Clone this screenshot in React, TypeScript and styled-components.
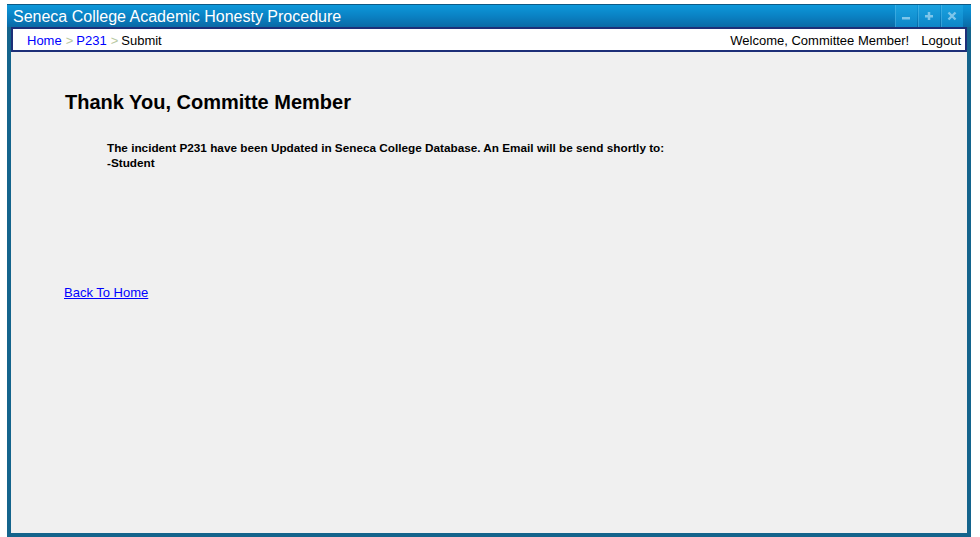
import React from "react";
import styled, { createGlobalStyle } from "styled-components";

const Global = createGlobalStyle`
  html, body { margin: 0; padding: 0; background: #ffffff; }
  body { font-family: "Liberation Sans", Arial, sans-serif; }
`;

const Page = styled.div`
  padding: 4px 9px 0 7px;
  height: 537px;
  box-sizing: border-box;
`;

const Window = styled.div`
  height: 533px;
  box-sizing: border-box;
  display: flex;
  flex-direction: column;
  background: #14648c;
  border-top: 1px solid #0d5a86;
  padding: 0 4px 4px 4px;
`;

const TitleBar = styled.div`
  height: 22px;
  margin: 0 -4px;
  padding: 0 4px 0 6px;
  display: flex;
  align-items: center;
  background: linear-gradient(to bottom, #0d98da 0%, #0a82c4 50%, #0a6aa6 100%);
`;

const Title = styled.div`
  flex: 1;
  color: #ffffff;
  font-size: 16px;
  line-height: 22px;
  padding-top: 1px;
  white-space: nowrap;
`;

const Controls = styled.div`
  display: flex;
  height: 22px;
  margin-right: 4px;
`;

const Ctrl = styled.div`
  width: 22px;
  height: 22px;
  margin-left: 1px;
  display: flex;
  align-items: center;
  justify-content: center;
  background: linear-gradient(to bottom, #1aa2e0, #0e86c8);
  box-shadow: inset 1px 0 0 rgba(120, 200, 240, 0.35);
`;

const NavBar = styled.div`
  height: 19px;
  border: 2px solid #1d2f78;
  background: #ffffff;
  display: flex;
  align-items: center;
  justify-content: space-between;
  padding: 2px 4px 0 14px;
  box-sizing: content-box;
  font-size: 13px;
  color: #000;
`;

const Crumbs = styled.div`
  display: flex;
  align-items: center;
`;

const CrumbLink = styled.span`
  color: #0000ff;
`;

const Sep = styled.span`
  color: #b8c8a0;
  margin: 0 3px 0 4px;
`;

const UserArea = styled.div`
  display: flex;
  gap: 12px;
`;

const Content = styled.div`
  flex: 1;
  background: #f0f0f0;
  padding: 38px 0 0 54px;
`;

const Heading = styled.h1`
  margin: 0;
  font-size: 20px;
  font-weight: bold;
  color: #000;
  line-height: 24px;
`;

const Message = styled.div`
  margin: 26px 0 0 42px;
  font-size: 11.75px;
  font-weight: bold;
  line-height: 15px;
  color: #000;
`;

const BackLink = styled.a`
  display: inline-block;
  margin: 115px 0 0 -1px;
  font-size: 13px;
  color: #0000ff;
  text-decoration: underline;
`;

const iconColor = "#7ec6ea";

export default function App() {
  return (
    <>
      <Global />
      <Page>
        <Window>
          <TitleBar>
            <Title>Seneca College Academic Honesty Procedure</Title>
            <Controls>
              <Ctrl>
                <svg width="10" height="10" viewBox="0 0 10 10">
                  <rect x="1" y="6" width="8" height="2.5" fill={iconColor} />
                </svg>
              </Ctrl>
              <Ctrl>
                <svg width="10" height="10" viewBox="0 0 10 10">
                  <rect x="1" y="4" width="8" height="2.5" fill={iconColor} />
                  <rect x="3.75" y="1" width="2.5" height="8" fill={iconColor} />
                </svg>
              </Ctrl>
              <Ctrl>
                <svg width="10" height="10" viewBox="0 0 10 10">
                  <path d="M1.5 1.5 L8.5 8.5 M8.5 1.5 L1.5 8.5" stroke={iconColor} strokeWidth="2.4" />
                </svg>
              </Ctrl>
            </Controls>
          </TitleBar>
          <NavBar>
            <Crumbs>
              <CrumbLink>Home</CrumbLink>
              <Sep>&gt;</Sep>
              <CrumbLink>P231</CrumbLink>
              <Sep>&gt;</Sep>
              <span>Submit</span>
            </Crumbs>
            <UserArea>
              <span>Welcome, Committee Member!</span>
              <span>Logout</span>
            </UserArea>
          </NavBar>
          <Content>
            <Heading>Thank You, Committe Member</Heading>
            <Message>
              The incident P231 have been Updated in Seneca College Database. An Email will be send shortly to:
              <br />
              -Student
            </Message>
            <BackLink href="#">Back To Home</BackLink>
          </Content>
        </Window>
      </Page>
    </>
  );
}
